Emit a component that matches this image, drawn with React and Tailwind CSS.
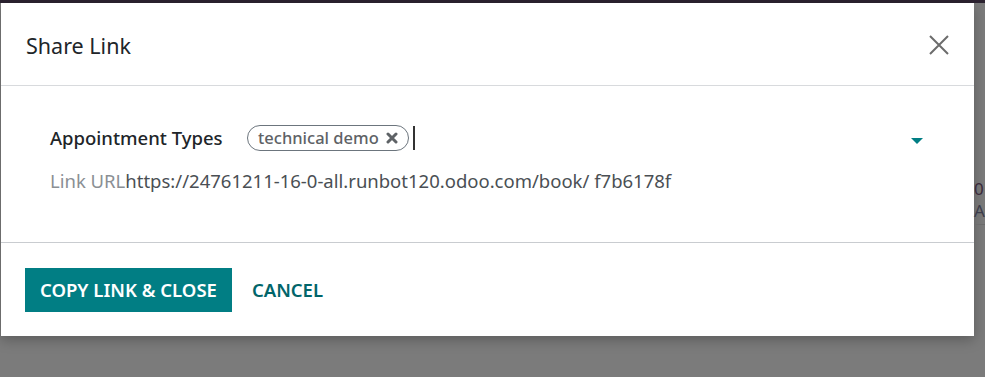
export default function App() {
	return (
		<div className="relative w-[985px] h-[377px] overflow-hidden bg-[#7b7b7b]" style={{ fontFamily: '"Noto Sans", "Open Sans", sans-serif' }}>
			<div className="h-[3px] bg-[#2c2230]"></div>
			<div className="absolute right-0 top-[3px] w-[11px] h-full">
				<div className="mt-[175px] text-[17px] leading-[22px] text-[#3a2a3a]">0</div>
				<div className="text-[17px] leading-[22px] text-[#3c3c4a]">A</div>
				<div className="mt-[2px] h-px bg-[#6c6c6c]"></div>
			</div>

			<div className="ml-[1px] w-[973px] bg-white shadow-[0_4px_12px_rgba(0,0,0,0.25)]">
				<header className="h-[83px] flex items-center justify-between pl-[25px] pr-[24px] border-b border-[#d8dadd]">
					<h4 className="text-[21.5px] text-[#212529] mt-[4px]">Share Link</h4>
					<button className="text-[#6c6c6c] mt-[2px]">
						<svg width="22" height="22" viewBox="0 0 22 22" fill="none" stroke="currentColor" strokeWidth="2">
							<path d="M2 2 L20 20 M20 2 L2 20" />
						</svg>
					</button>
				</header>

				<section className="h-[157px] pl-[49px] pr-[48px] pt-[37px] border-b border-[#c9ccd0]">
					<div className="flex items-center h-[30px]">
						<label className="w-[197px] text-[18.5px] text-[#212529] font-medium">Appointment Types</label>
						<div className="flex-1 flex items-center">
							<span className="flex items-center gap-[7px] h-[26px] px-[10px] border border-[#6c757d] rounded-full text-[16.5px] text-[#5e6266] font-medium">
								technical demo
								<svg width="12" height="12" viewBox="0 0 12 12" className="text-[#5e6266]">
									<path d="M2 2 L10 10 M10 2 L2 10" stroke="currentColor" strokeWidth="3" strokeLinecap="round" />
								</svg>
							</span>
							<span className="ml-[4px] w-[2px] h-[24px] bg-[#333]"></span>
							<span className="flex-1"></span>
							<svg width="12" height="6" viewBox="0 0 12 6" className="mr-[3px] mt-[6px]">
								<path d="M0 0 L12 0 L6 6 Z" fill="#017e84" />
							</svg>
						</div>
					</div>
					<div className="mt-[14px] text-[18.5px] text-[#212529]">
						<span className="text-[#8a8f94]">Link URL</span>
						<span className="text-[#4a4f54]">https://24761211-16-0-all.runbot120.odoo.com/book/ f7b6178f</span>
					</div>
				</section>

				<footer className="h-[93px] flex items-center gap-[4px] pl-[24px]">
					<button className="h-[44px] px-[15px] bg-[#017e84] text-white text-[18.5px] font-semibold">COPY LINK &amp; CLOSE</button>
					<button className="h-[44px] px-[16px] text-[#01656a] text-[18.5px] font-semibold">CANCEL</button>
				</footer>
			</div>
		</div>
	)
}
